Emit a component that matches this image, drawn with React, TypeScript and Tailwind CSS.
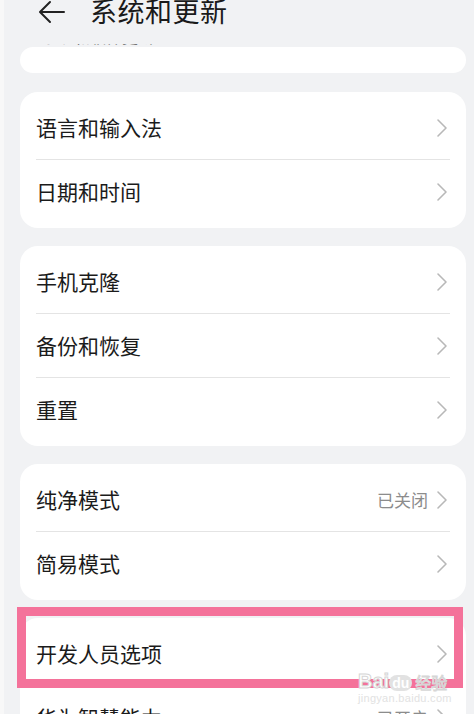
import React from 'react';

const FONT = { fontFamily: '"Noto Sans CJK SC", "Noto Sans", sans-serif' };

type Row = { label: string; value?: string };

const GROUPS: Row[][] = [
  [{ label: '语言和输入法' }, { label: '日期和时间' }],
  [{ label: '手机克隆' }, { label: '备份和恢复' }, { label: '重置' }],
  [{ label: '纯净模式', value: '已关闭' }, { label: '简易模式' }],
];

function Chevron() {
  return (
    <svg width="12" height="20" viewBox="0 0 12 20" className="shrink-0">
      <path d="M2 2 L10 10 L2 18" fill="none" stroke="#b8b8b8" strokeWidth="1.6" strokeLinecap="round" strokeLinejoin="round" />
    </svg>
  );
}

function SettingRow({ label, value, divider }: Row & { divider?: boolean }) {
  return (
    <div className="relative h-16 flex items-center pl-4 pr-[18px]">
      <span className="flex-1 text-[21px] text-[#1b1b1b]">{label}</span>
      {value && <span className="text-[17px] text-[#8c8c8c] mr-[8px]">{value}</span>}
      <Chevron />
      {divider && <div className="absolute left-4 right-4 bottom-0 h-px bg-[#e4e4e4]" />}
    </div>
  );
}

function Card({ rows }: { rows: Row[] }) {
  return (
    <div className="bg-white rounded-[18px] py-1">
      {rows.map((r, i) => (
        <SettingRow key={r.label} {...r} divider={i < rows.length - 1} />
      ))}
    </div>
  );
}

export default function App() {
  return (
    <div className="w-[474px] h-[714px] overflow-hidden bg-[#f1f2f4] border-l-[4px] border-[#f8f8f8] relative" style={FONT}>
      {/* header */}
      <div className="h-[44px] flex items-start pl-[34px]">
        <svg width="28" height="24" viewBox="0 0 28 24">
          <path d="M26 12 H3 M12 2 L2 12 L12 22" fill="none" stroke="#222" strokeWidth="2" strokeLinecap="round" strokeLinejoin="round" />
        </svg>
        <span className="ml-[24px] -mt-[6px] text-[27px] leading-[34px] text-[#1a1a1a] tracking-[0.5px]">系统和更新</span>
      </div>

      {/* cut off previous row */}
      <div className="pl-4 pr-2">
        <div className="h-[3px] overflow-hidden pl-[22px]">
          <div className="-mt-[18px] text-[16px] leading-[20px] text-[#777]">系统和软件更新</div>
        </div>
        <div className="h-[26px] bg-white rounded-[16px]" />
      </div>

      <div className="pl-4 pr-2 pt-[19px] flex flex-col gap-[18px]">
        {GROUPS.map((g) => (
          <Card key={g[0].label} rows={g} />
        ))}
        <div className="relative">
          <Card rows={[{ label: '开发人员选项' }, { label: '华为智慧能力', value: '已开启' }]} />
          {/* highlight frame */}
          <div className="absolute -left-[3px] right-[3px] -top-[11px] h-[81px] border-[9px] border-[#f4729a]" />
        </div>
      </div>

      {/* watermark */}
      <div className="absolute left-[354px] top-[671px] flex flex-col items-start pointer-events-none">
        <div className="flex items-end">
          <span className="text-[20px] leading-[20px] font-bold text-white" style={{ WebkitTextStroke: '1px #d6d6d6', fontFamily: '"Liberation Sans", sans-serif' }}>Bai</span>
          <span className="text-[14px] leading-[16px] font-bold text-white bg-[#e2e2e2] rounded-full px-[3px]" style={{ fontFamily: '"Liberation Sans", sans-serif' }}>du</span>
          <span className="ml-[3px] text-[16px] leading-[18px] text-white" style={{ WebkitTextStroke: '1px #d6d6d6' }}>经验</span>
        </div>
        <span className="text-[11px] leading-[15px] text-[#e2e2e2] tracking-[0.3px]" style={{ fontFamily: '"Liberation Sans", sans-serif' }}>jingyan.baidu.com</span>
      </div>
    </div>
  );
}
